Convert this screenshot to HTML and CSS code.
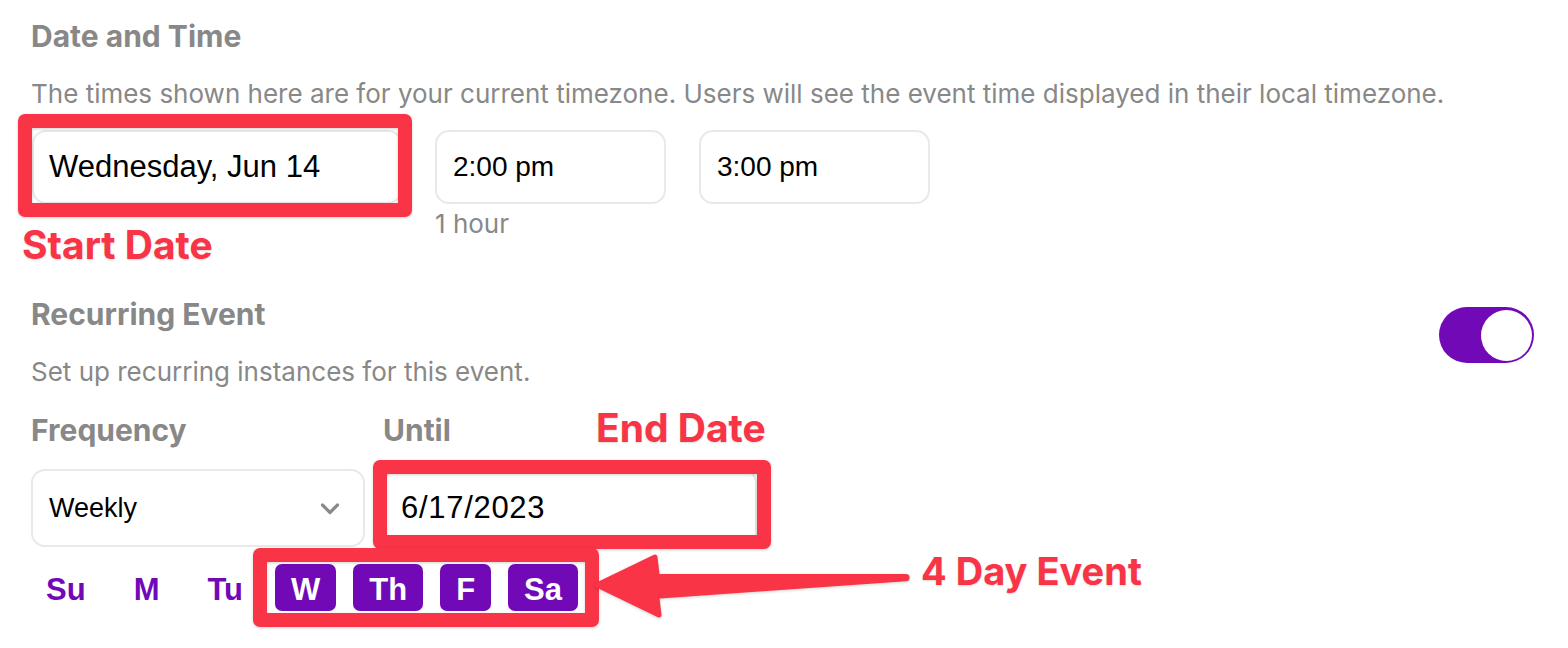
FILE: index.html
```html
<!DOCTYPE html>
<html lang="en">
<head>
<meta charset="utf-8">
<title>Event schedule</title>
<link rel="stylesheet" href="styles.css">
</head>
<body>
<main class="page">
  <section class="block">
    <h2 class="title">Date and Time</h2>
    <p class="desc">The times shown here are for your current timezone. Users will see the event time displayed in their local timezone.</p>
    <div class="time-row">
      <div class="field field-date">
        <div class="boxed boxed-date">
          <div class="input input-date">Wednesday, Jun 14</div>
          <span class="mark mark-date"></span>
        </div>
        <div class="note note-start">Start Date</div>
      </div>
      <div class="field field-time">
        <div class="input input-time">2:00 pm</div>
        <div class="hint">1 hour</div>
      </div>
      <div class="field field-time">
        <div class="input input-time">3:00 pm</div>
      </div>
    </div>
  </section>

  <section class="block block-rec">
    <div class="rec-head">
      <div class="rec-text">
        <h2 class="title">Recurring Event</h2>
        <p class="desc desc-rec">Set up recurring instances for this event.</p>
      </div>
      <div class="toggle"><span class="knob"></span></div>
    </div>

    <div class="freq-row">
      <div class="col col-freq">
        <div class="label">Frequency</div>
        <div class="input select">
          <span>Weekly</span>
          <svg class="chev" width="22" height="14" viewBox="0 0 22 14"><path d="M3.5 3 L11 10.5 L18.5 3" fill="none" stroke="#8a8a8a" stroke-width="3.2" stroke-linecap="round" stroke-linejoin="round"/></svg>
        </div>
      </div>
      <div class="col col-until">
        <div class="label-row">
          <div class="label">Until</div>
          <div class="note note-end">End Date</div>
        </div>
        <div class="boxed boxed-until">
          <div class="input input-until">6/17/2023</div>
          <span class="mark mark-until"></span>
        </div>
      </div>
    </div>

    <div class="days-row">
      <span class="day">Su</span>
      <span class="day">M</span>
      <span class="day">Tu</span>
      <div class="days-sel">
        <span class="day day-on">W</span>
        <span class="day day-on">Th</span>
        <span class="day day-on">F</span>
        <span class="day day-on">Sa</span>
        <span class="mark mark-days"></span>
      </div>
      <svg class="arrow" width="330" height="90" viewBox="0 0 330 90">
        <path d="M12 46 L70 18 L72 35 L72 59 L74 76 Z" fill="#f93446" stroke="#f93446" stroke-width="5" stroke-linejoin="round"/>
        <path d="M68 35 L321 35 A3.6 3.6 0 0 1 321 42.2 L68 60 Z" fill="#f93446"/>
      </svg>
      <div class="note note-days">4 Day Event</div>
    </div>
  </section>
</main>
</body>
</html>
```
FILE: styles.css
```css
* { box-sizing: border-box; }
html, body { margin: 0; padding: 0; background: #fff; }
body { font-family: Inter, "Noto Sans", sans-serif; }

.page {
  position: relative;
  width: 1568px;
  height: 648px;
  padding: 19px 34px 0 31px;
  overflow: hidden;
}

.title {
  margin: 0;
  font-size: 30px;
  line-height: 34px;
  font-weight: 700;
  color: #888;
}

.desc {
  margin: 26px 0 0;
  font-size: 26px;
  line-height: 30px;
  font-weight: 400;
  color: #888;
}

.time-row {
  display: flex;
  align-items: flex-start;
  gap: 33px;
  margin-top: 21px;
  padding-left: 1px;
}

.field { display: flex; flex-direction: column; }

.input {
  display: flex;
  align-items: center;
  height: 74px;
  padding: 0 16px;
  border: 2px solid #e9e9e9;
  border-radius: 14px;
  background: #fff;
  font-family: "Liberation Sans", Arial, sans-serif;
  font-size: 28px;
  color: #000;
}

.input-date { width: 370px; font-size: 31px; padding-left: 15px; }
.input-time { width: 231px; }

.boxed { position: relative; }

.mark {
  position: absolute;
  border: 14px solid #f93446;
  border-radius: 7px;
  pointer-events: none;
  filter: drop-shadow(0 1px 1.5px rgba(0,0,0,0.18));
}
.mark-date { top: -16px; left: -14px; right: -10px; bottom: -13px; }
.mark-until { top: -9px; left: -10px; right: -14px; bottom: -2px; }
.mark-days { top: -16px; left: -22px; right: -21px; bottom: -16px; }

.hint {
  margin-top: 5px;
  font-size: 26px;
  line-height: 30px;
  color: #888;
}

.note {
  font-size: 39px;
  line-height: 40px;
  font-weight: 700;
  color: #f93446;
  text-shadow: 0 1px 2px rgba(0,0,0,0.15);
  white-space: nowrap;
}
.note-start { margin: 21px 0 0 -10px; }

.block-rec { margin-top: 32px; }

.rec-head {
  display: flex;
  justify-content: space-between;
  align-items: flex-start;
}

.toggle {
  display: flex;
  justify-content: flex-end;
  align-items: center;
  width: 95px;
  height: 56px;
  margin-top: 10px;
  padding: 0 2px;
  border-radius: 28px;
  background: #7209b7;
}
.knob {
  width: 51px;
  height: 51px;
  border-radius: 50%;
  background: #fff;
}

.freq-row {
  display: flex;
  gap: 18px;
  margin-top: 26px;
}

.col { display: flex; flex-direction: column; }

.label {
  font-size: 30px;
  line-height: 34px;
  font-weight: 700;
  color: #888;
}

.label-row { position: relative; height: 34px; }
.note-end { position: absolute; left: 213px; top: -5px; }

.select {
  width: 334px;
  height: 78px;
  margin-top: 22px;
  justify-content: space-between;
  padding-right: 22px;
  font-size: 27px;
}
.chev { display: block; margin-top: 2px; }

.boxed-until { margin-top: 22px; }
.input-until { width: 374px; height: 78px; font-size: 31px; letter-spacing: 0.7px; padding-left: 16px; }

.days-row {
  position: relative;
  display: flex;
  align-items: center;
  gap: 16px;
  margin-top: 17px;
  margin-left: -1px;
}

.day {
  display: flex;
  align-items: center;
  height: 47px;
  padding: 5px 16px 0;
  border-radius: 7px;
  font-family: "Liberation Sans", Arial, sans-serif;
  font-size: 31px;
  font-weight: 700;
  color: #7209b7;
}
.day-on { background: #7209b7; color: #fff; }

.days-sel {
  position: relative;
  display: flex;
  gap: 17px;
}

.arrow {
  position: absolute;
  left: 555px;
  top: -25px;
  filter: drop-shadow(0 1px 1.5px rgba(0,0,0,0.18));
}

.note-days {
  position: absolute;
  left: 891px;
  top: -13px;
  font-size: 38px;
}
```
